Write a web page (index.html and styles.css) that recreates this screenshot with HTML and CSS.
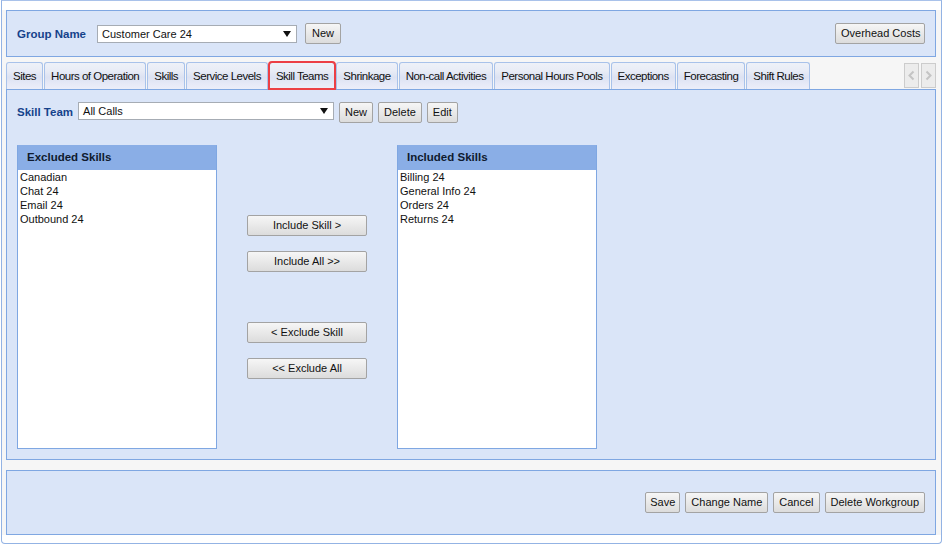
FILE: index.html
```html
<!DOCTYPE html>
<html>
   <head>
      <meta charset="UTF-8">
      <title>Workgroup - Skill Teams</title>
      <link rel="stylesheet" href="styles.css">
   </head>
   <body>
      <div class="frame">
         <div class="panel group-bar">
            <span class="field-label">Group Name</span>
            <div class="combo combo-group">Customer Care 24<span class="combo-arrow"></span></div>
            <button class="btn btn-new">New</button>
            <button class="btn btn-overhead">Overhead Costs</button>
         </div>

         <div class="tabbar">
            <div class="tab">Sites</div>
            <div class="tab">Hours of Operation</div>
            <div class="tab">Skills</div>
            <div class="tab">Service Levels</div>
            <div class="tab tab-active">Skill Teams</div>
            <div class="tab">Shrinkage</div>
            <div class="tab">Non-call Activities</div>
            <div class="tab">Personal Hours Pools</div>
            <div class="tab">Exceptions</div>
            <div class="tab">Forecasting</div>
            <div class="tab">Shift Rules</div>
            <div class="tab-nav">
               <span class="nav-btn"><svg width="13" height="23" viewBox="0 0 13 23"><path d="M8.5 7.5 L4.5 11.5 L8.5 15.5" fill="none" stroke="#c4c4c4" stroke-width="2"/></svg></span>
               <span class="nav-btn"><svg width="13" height="23" viewBox="0 0 13 23"><path d="M4.5 7.5 L8.5 11.5 L4.5 15.5" fill="none" stroke="#c4c4c4" stroke-width="2"/></svg></span>
            </div>
         </div>

         <div class="panel content">
            <div class="team-row">
               <span class="field-label">Skill Team</span>
               <div class="combo combo-team">All Calls<span class="combo-arrow"></span></div>
               <button class="btn">New</button>
               <button class="btn">Delete</button>
               <button class="btn">Edit</button>
            </div>

            <div class="transfer">
               <div class="listbox">
                  <div class="listbox-head">Excluded Skills</div>
                  <ul class="listbox-items">
                     <li>Canadian</li>
                     <li>Chat 24</li>
                     <li>Email 24</li>
                     <li>Outbound 24</li>
                  </ul>
               </div>

               <div class="transfer-buttons">
                  <button class="btn btn-move">Include Skill &gt;</button>
                  <button class="btn btn-move">Include All &gt;&gt;</button>
                  <button class="btn btn-move btn-split">&lt; Exclude Skill</button>
                  <button class="btn btn-move">&lt;&lt; Exclude All</button>
               </div>

               <div class="listbox">
                  <div class="listbox-head">Included Skills</div>
                  <ul class="listbox-items">
                     <li>Billing 24</li>
                     <li>General Info 24</li>
                     <li>Orders 24</li>
                     <li>Returns 24</li>
                  </ul>
               </div>
            </div>
         </div>

         <div class="panel footer">
            <button class="btn">Save</button>
            <button class="btn">Change Name</button>
            <button class="btn">Cancel</button>
            <button class="btn">Delete Workgroup</button>
         </div>
      </div>
   </body>
</html>
```

FILE: styles.css
```css
*
{
   box-sizing: border-box;
}

body
{
   margin: 0;
   background: #ffffff;
   font-family: "Liberation Sans", Arial, sans-serif;
   font-size: 11px;
   color: #111111;
}

.frame
{
   width: 941px;
   height: 544px;
   margin-left: 1px;
   padding: 9px 5px 0 4px;
   border: 1px solid #93b3e4;
   border-top-color: #a9c2ea;
   border-radius: 0 0 4px 4px;
   background:
      linear-gradient(to top, #ffffff 0, #ffffff 8px, transparent 8px),
      linear-gradient(#ffffff 0, #ffffff 9px, #f6f6f6 9px);
}

.panel
{
   border: 1px solid #7fa7e2;
   background: #dae5f8;
}

.field-label
{
   font-weight: bold;
   font-size: 11.5px;
   color: #15428b;
}

/* header with group selector */

.group-bar
{
   height: 47px;
   display: flex;
   align-items: center;
   padding: 0 10px;
}

.combo
{
   position: relative;
   height: 18px;
   line-height: 16px;
   padding-left: 4px;
   border: 1px solid #a6acb4;
   background: #ffffff;
   white-space: nowrap;
}

.combo-arrow
{
   position: absolute;
   right: 5px;
   top: 5px;
   border-left: 4px solid transparent;
   border-right: 4px solid transparent;
   border-top: 6px solid #111111;
}

.combo-group
{
   width: 200px;
   margin-left: 11px;
}

.btn
{
   height: 21px;
   padding: 0 5px 1px;
   border: 1px solid #a3a3a3;
   border-radius: 2px;
   background: linear-gradient(#f6f6f6, #e9e9e9 50%, #dcdcdc);
   font-family: "Liberation Sans", Arial, sans-serif;
   font-size: 11px;
   color: #111111;
   white-space: nowrap;
}

.btn-new
{
   margin-left: 8px;
   padding: 0 6px 1px;
}

.btn-overhead
{
   margin-left: auto;
   width: 90px;
}

/* tabs */

.tabbar
{
   display: flex;
   align-items: flex-end;
   height: 27px;
   margin-top: 5px;
}

.tab
{
   height: 27px;
   margin-right: 1px;
   padding: 0 6px;
   line-height: 26px;
   border: 1px solid #a8c2ea;
   border-bottom: none;
   border-radius: 3px 3px 0 0;
   background: linear-gradient(#eef1f8 0%, #e8ecf6 30%, #dce2f2 55%, #e6e9f7 80%, #eceef9 100%);
   font-size: 11.5px;
   letter-spacing: -0.5px;
   white-space: nowrap;
}

.tab-active
{
   outline: 2px solid #ec3f45;
   outline-offset: -1px;
}

.tab-nav
{
   display: flex;
   gap: 2px;
   margin-left: auto;
   align-self: flex-start;
   margin-top: 1px;
}

.nav-btn
{
   display: block;
   width: 15px;
   height: 25px;
   border: 1px solid #cccccc;
   background: #ececec;
}

.nav-btn svg
{
   display: block;
}

/* skill team panel */

.content
{
   height: 371px;
   padding: 12px 10px 0 10px;
}

.team-row
{
   display: flex;
   align-items: center;
   height: 21px;
}

.team-row .field-label
{
   margin-top: -1px;
}

.team-row .btn
{
   margin-left: 5px;
}

.combo-team
{
   width: 256px;
   margin-left: 5px;
   align-self: flex-start;
}

.transfer
{
   display: flex;
   gap: 30px;
   margin-top: 22px;
}

.listbox
{
   width: 200px;
   height: 304px;
   border: 1px solid #7fa7e2;
   border-top-color: #8aaee6;
   background: #ffffff;
}

.listbox-head
{
   height: 24px;
   line-height: 22px;
   padding-left: 9px;
   background: #8aaee6;
   font-weight: bold;
   font-size: 11.5px;
   color: #0f1a2e;
}

.listbox-items
{
   list-style: none;
   margin: 0;
   padding: 0 0 0 2px;
   line-height: 14px;
}

.transfer-buttons
{
   display: flex;
   flex-direction: column;
   padding-top: 70px;
}

.btn-move
{
   width: 120px;
   margin-bottom: 15px;
}

.btn-split
{
   margin-top: 35px;
}

/* footer actions */

.footer
{
   height: 65px;
   margin-top: 10px;
   display: flex;
   justify-content: flex-end;
   align-items: flex-start;
   gap: 5px;
   padding: 21px 10px 0 0;
}

.footer .btn:first-child
{
   padding: 0 4px 1px;
}
```
